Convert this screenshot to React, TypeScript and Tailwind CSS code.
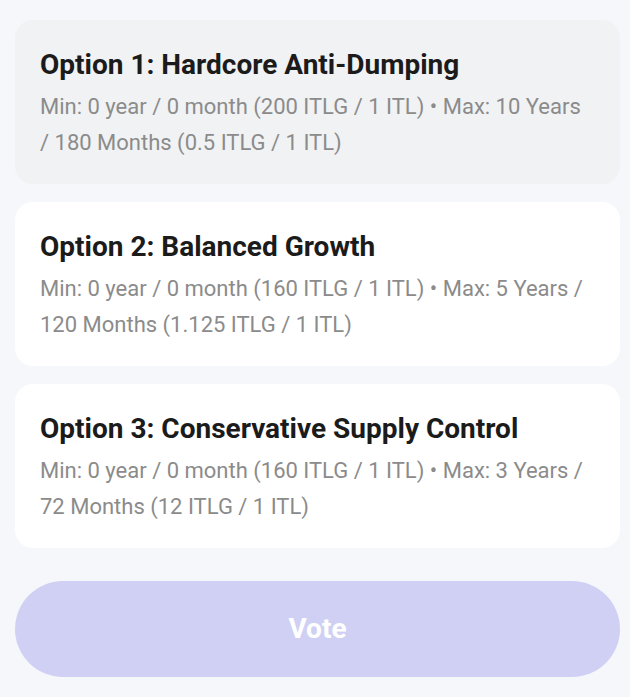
const options = [
  {
    title: "Option 1: Hardcore Anti-Dumping",
    desc: "Min: 0 year / 0 month (200 ITLG / 1 ITL) • Max: 10 Years / 180 Months (0.5 ITLG / 1 ITL)",
    selected: true,
  },
  {
    title: "Option 2: Balanced Growth",
    desc: "Min: 0 year / 0 month (160 ITLG / 1 ITL) • Max: 5 Years / 120 Months (1.125 ITLG / 1 ITL)",
    selected: false,
  },
  {
    title: "Option 3: Conservative Supply Control",
    desc: "Min: 0 year / 0 month (160 ITLG / 1 ITL) • Max: 3 Years / 72 Months (12 ITLG / 1 ITL)",
    selected: false,
  },
]

export default function App() {
  return (
    <div className="min-h-[697px] w-[630px] bg-[#f6f7fa] pl-[15px] pr-[10px] pt-[20px] font-['Roboto',sans-serif]">
      <div className="flex flex-col gap-[18px]">
        {options.map((o) => (
          <div
            key={o.title}
            className={`rounded-[18px] pl-[25px] pr-[31px] pt-[29px] pb-[23px] ${
              o.selected ? "bg-[#f1f2f4]" : "bg-white"
            }`}
          >
            <div className="text-[28px] font-bold leading-[32px] text-[#1b1b1b]">{o.title}</div>
            <div className="mt-[8px] text-[22px] leading-[36px] text-[#8b8b8b]">{o.desc}</div>
          </div>
        ))}
      </div>
      <button className="mt-[33px] flex h-[96px] w-full items-center justify-center rounded-full bg-[#cfd0f4] text-[28px] font-bold text-white">
        Vote
      </button>
    </div>
  )
}
